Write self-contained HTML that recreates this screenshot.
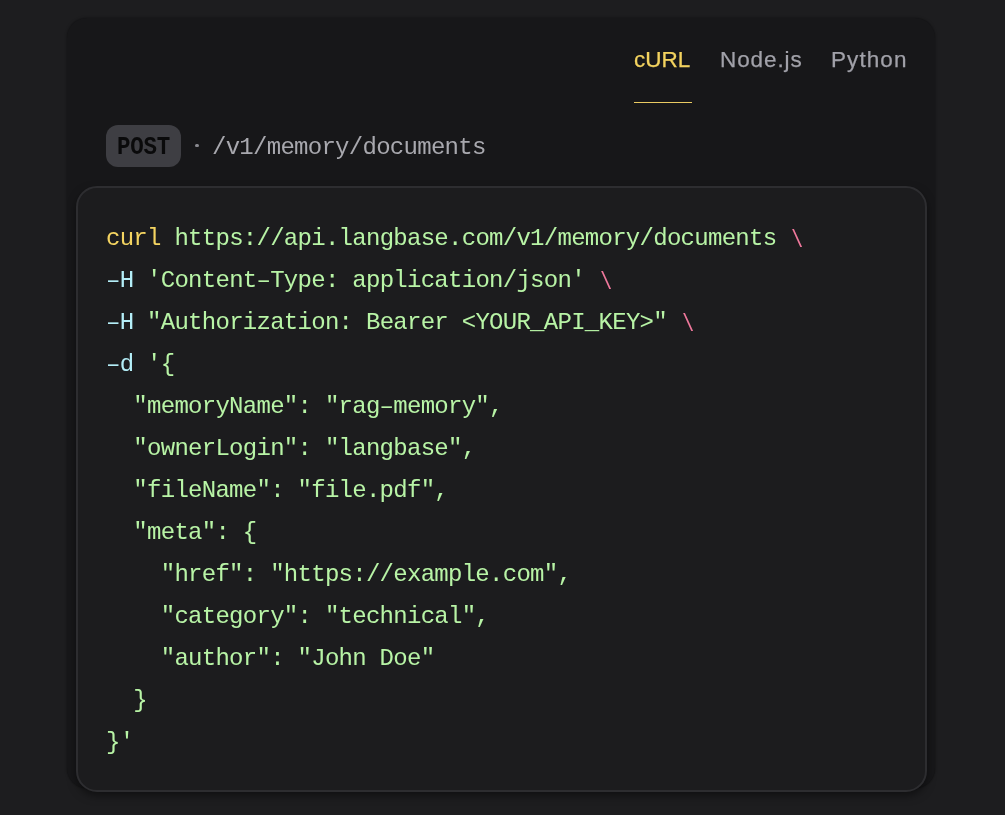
<!DOCTYPE html>
<html>
<head>
<meta charset="utf-8">
<style>
html,body{margin:0;padding:0;}
.gs{will-change:transform;}
body{width:1005px;height:815px;background:#1d1d1f;position:relative;overflow:hidden;font-family:"Liberation Sans",sans-serif;}
.card{position:absolute;left:67px;top:18px;width:867.5px;height:770px;background:#171719;border-radius:20px;box-shadow:0 0 2.5px rgba(0,0,0,0.5);}
.tab{position:absolute;top:0;font-family:"Liberation Sans",sans-serif;font-size:22.5px;line-height:1;white-space:nowrap;color:#a1a1a9;-webkit-text-stroke:0.25px currentColor;}
.t1{color:#f3d35f;}
.uline{position:absolute;left:634px;top:101.7px;width:58px;height:1.5px;background:#eacb62;}
.badge{position:absolute;left:106px;top:125px;width:75px;height:42px;border-radius:12px;background:#3e3e43;}
.mono{font-family:"Liberation Mono",monospace;font-size:24px;letter-spacing:-0.722px;white-space:pre;line-height:1;}
.post{position:absolute;color:#0a0a0b;font-weight:bold;font-size:25.5px;letter-spacing:-0.2px;transform:scaleX(0.88);transform-origin:0 0;}
.dot{position:absolute;left:195.3px;top:143.7px;width:3.5px;height:3.5px;border-radius:2px;background:#8a8a90;}
.path{position:absolute;color:#a8a8ae;}
.code{position:absolute;left:76px;top:186px;width:847px;height:602px;background:#1c1c1e;border:2px solid #2d2d30;border-radius:21px;box-shadow:0 4px 10px -1px rgba(0,0,0,0.5);}
.lines{position:absolute;left:0;top:0;}
.ln{position:absolute;left:106px;}
.y{color:#f4d461}.g{color:#b8f4a6}.c{color:#b4eef8}.p{color:#ef789c;display:inline-block;transform:translateY(1.5px) scaleX(0.85);}

</style>
</head>
<body>
<div class="gs" style="position:absolute;left:0;top:0;width:1005px;height:815px;">
<div class="card"></div>
<span class="tab t1" id="tab1" style="left:634px;top:49px;">cURL</span>
<span class="tab" id="tab2" style="left:720px;top:49.4px;letter-spacing:0.9px;">Node.js</span>
<span class="tab" id="tab3" style="left:831px;top:49.4px;letter-spacing:1.08px;">Python</span>
<div class="uline"></div>
<div class="badge"></div>
<span class="mono post" id="post" style="left:116.8px;top:134.7px;">POST</span>
<div class="dot"></div>
<span class="mono path" id="path" style="left:212px;top:135.5px;">/v1/memory/documents</span>
<div class="code"></div>
<div class="lines mono">
<span class="ln" style="top:227px"><span class="y">curl</span> <span class="g">https://api.langbase.com/v1/memory/documents</span> <span class="p">\</span></span>
<span class="ln" style="top:269px"><span class="c">–H</span> <span class="g">'Content–Type: application/json'</span> <span class="p">\</span></span>
<span class="ln" style="top:311px"><span class="c">–H</span> <span class="g">"Authorization: Bearer &lt;YOUR_API_KEY&gt;"</span> <span class="p">\</span></span>
<span class="ln" style="top:353px"><span class="c">–d</span> <span class="g">'{</span></span>
<span class="ln g" style="top:395px">  "memoryName": "rag–memory",</span>
<span class="ln g" style="top:437px">  "ownerLogin": "langbase",</span>
<span class="ln g" style="top:479px">  "fileName": "file.pdf",</span>
<span class="ln g" style="top:521px">  "meta": {</span>
<span class="ln g" style="top:563px">    "href": "https://example.com",</span>
<span class="ln g" style="top:605px">    "category": "technical",</span>
<span class="ln g" style="top:647px">    "author": "John Doe"</span>
<span class="ln g" style="top:689px">  }</span>
<span class="ln g" style="top:731px">}'</span>
</div>
</div>
</body>
</html>
